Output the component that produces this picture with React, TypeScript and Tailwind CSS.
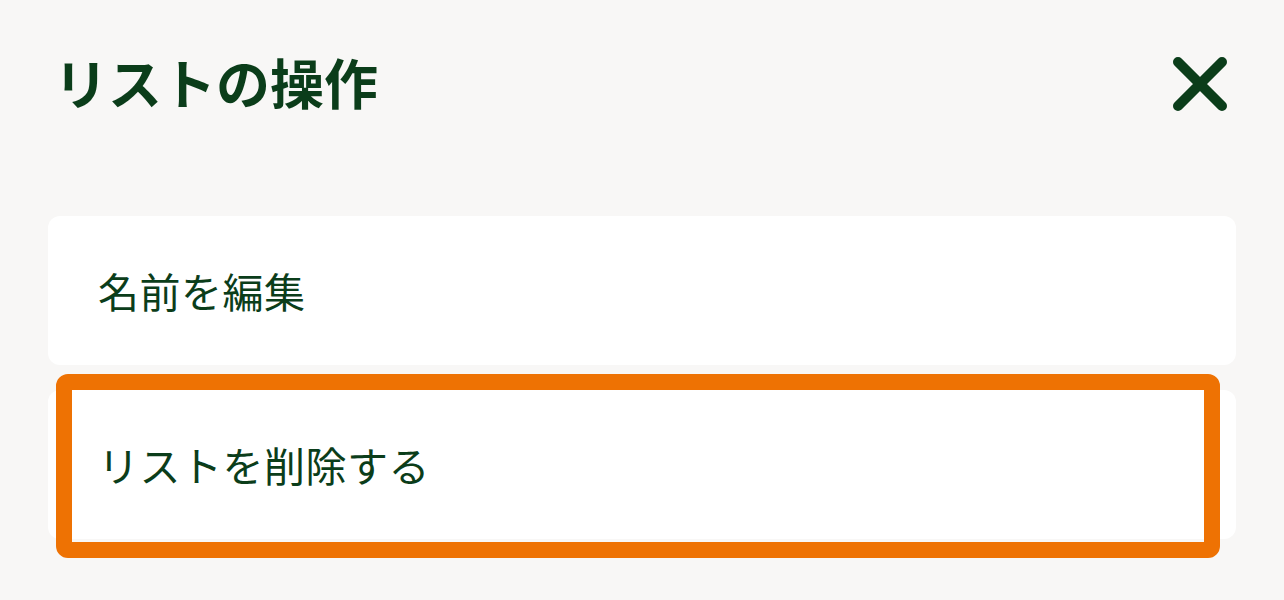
import { useState } from "react";

const actions = ["名前を編集", "リストを削除する"];

const CloseIcon = () => (
  <svg width="56" height="56" viewBox="0 0 56 56" fill="none">
    <path d="M6 6 L50 50 M50 6 L6 50" stroke="#0b3d1a" strokeWidth="10" strokeLinecap="round" />
  </svg>
);

export default function App() {
  const [selected] = useState(1);

  return (
    <div
      className="w-[1284px] h-[600px] bg-[#f8f7f6] overflow-hidden text-[#0b3d1a]"
      style={{ fontFamily: '"Noto Sans CJK JP", "Noto Sans", sans-serif' }}
    >
      {/* Header */}
      <div className="flex items-center justify-between pl-[54px] pr-[56px] pt-[50px] h-[118px]">
        <h1 className="text-[54px] font-bold leading-none mt-[-4px]">リストの操作</h1>
        <button className="w-[56px] h-[56px] flex items-center justify-center">
          <CloseIcon />
        </button>
      </div>

      {/* Actions */}
      <div className="flex flex-col gap-[25px] px-[48px] pt-[98px]">
        {actions.map((label, i) => (
          <div key={label} className="relative">
            <div className="h-[149px] bg-white rounded-[12px] flex items-center px-[50px]">
              <span className="text-[41px] leading-none tracking-[0.5px]">{label}</span>
            </div>
            {i === selected && (
              <div className="absolute left-[8px] right-[16px] top-[-16px] bottom-[-19px] border-[16px] border-[#ee7203] rounded-[12px] pointer-events-none" />
            )}
          </div>
        ))}
      </div>
    </div>
  );
}
